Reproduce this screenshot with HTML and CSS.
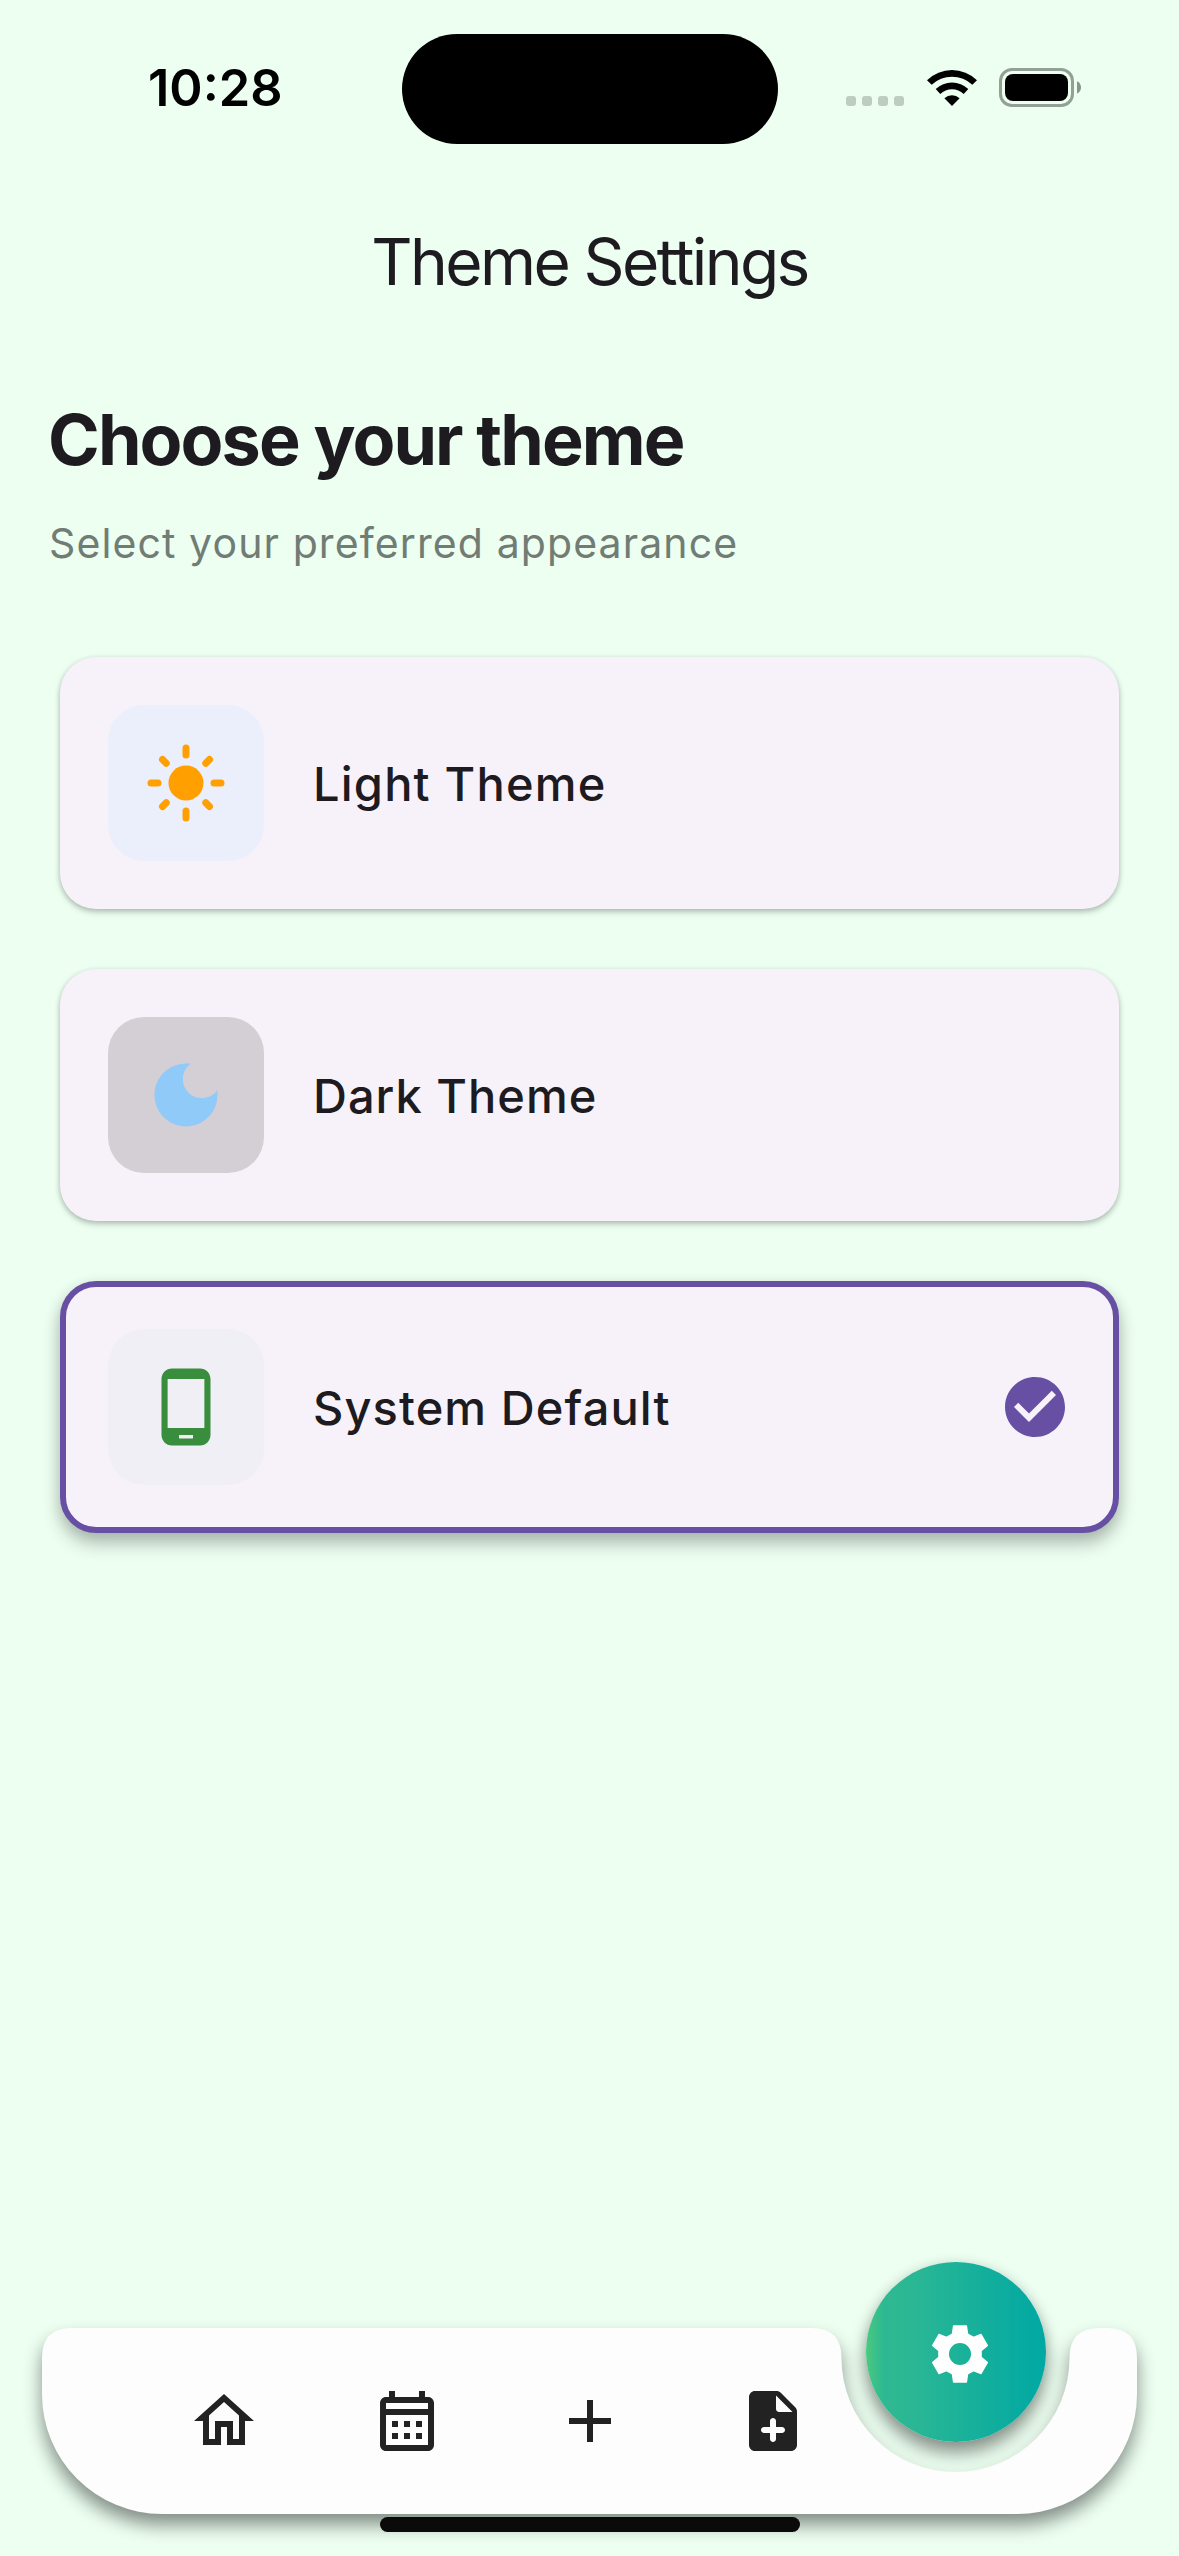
FILE: index.html
```html
<!DOCTYPE html>
<html lang="en">
<head>
<meta charset="utf-8">
<title>Theme Settings</title>
<link rel="stylesheet" href="styles.css">
</head>
<body>
<div class="screen">
  <header class="status">
    <div class="status-time">10:28</div>
    <div class="island"></div>
    <div class="status-icons">
      <svg class="signal" viewBox="0 0 58 10"><rect width="10" height="10" rx="3"/><rect x="16" width="10" height="10" rx="3"/><rect x="32" width="10" height="10" rx="3"/><rect x="48" width="10" height="10" rx="3"/></svg>
      <svg class="wifi" viewBox="0 0 50 37"><path d="M0 11.2A36 36 0 0 1 50 11.2L45.3 15.8A29.4 29.4 0 0 0 4.7 15.8ZM8.7 20A23.6 23.6 0 0 1 41.3 20L36.7 25A17 17 0 0 0 13.3 25ZM17.4 29.2A11.5 11.5 0 0 1 32.6 29.2L25 37Z"/></svg>
      <svg class="battery" viewBox="0 0 83 39"><rect x="1.5" y="1.5" width="72" height="36" rx="11.5" class="battery-case"/><rect x="6" y="6" width="63" height="27" rx="8"/><path class="battery-nub" d="M78 13.3C80.5 14.5 82 16.8 82 19.5S80.5 24.5 78 25.7Z"/></svg>
    </div>
  </header>

  <h1 class="title">Theme Settings</h1>

  <main class="content">
    <h2 class="heading">Choose your theme</h2>
    <p class="subtitle">Select your preferred appearance</p>
    <div class="cards">
      <div class="card">
        <div class="tile tile-light"><svg class="tile-icon sun" viewBox="0 0 24 24"><circle cx="12" cy="12" r="5"/><path d="M2 12h2M20 12h2M12 2v2M12 20v2M5.29 5.29l1.06 1.06M17.65 17.65l1.06 1.06M18.71 5.29l-1.06 1.06M6.35 17.65l-1.06 1.06"/></svg></div>
        <span class="label label-light">Light Theme</span>
      </div>
      <div class="card">
        <div class="tile tile-dark"><svg class="tile-icon moon" viewBox="0 0 24 24"><path d="M12 3c-4.97 0-9 4.03-9 9s4.03 9 9 9 9-4.03 9-9c0-.46-.04-.92-.1-1.36-.98 1.37-2.58 2.26-4.4 2.26-2.98 0-5.4-2.42-5.4-5.4 0-1.81.89-3.42 2.26-4.4-.44-.06-.9-.1-1.36-.1z"/></svg></div>
        <span class="label label-dark">Dark Theme</span>
      </div>
      <div class="card card-selected">
        <div class="tile tile-system"><svg class="tile-icon phone" viewBox="0 0 24 24"><path d="M16 1H8C6.34 1 5 2.34 5 4v16c0 1.66 1.34 3 3 3h8c1.66 0 3-1.34 3-3V4c0-1.66-1.34-3-3-3zm-2 20h-4v-1h4v1zm3.25-3H6.75V4h10.5v14z"/></svg></div>
        <span class="label label-system">System Default</span>
        <svg class="check" viewBox="0 0 24 24"><path d="M12 2C6.48 2 2 6.48 2 12s4.48 10 10 10 10-4.48 10-10S17.52 2 12 2zm-2 15l-5-5 1.41-1.41L10 14.17l7.59-7.59L19 8l-9 9z"/></svg>
      </div>
    </div>
  </main>

  <nav class="nav">
    <svg class="nav-shape" viewBox="0 0 1095 186"><path d="M30 0H769.5Q799.5 0 799.5 30A114 114 0 0 0 1027.5 30Q1027.5 0 1057.5 0H1065Q1095 0 1095 30V66A120 120 0 0 1 975 186H120A120 120 0 0 1 0 66V30Q0 0 30 0Z"/></svg>
    <div class="nav-items">
      <svg class="nav-icon" viewBox="0 0 24 24"><path d="M12 5.69l5 4.5V18h-2v-6H9v6H7v-7.81l5-4.5M12 3L2 12h3v8h6v-6h2v6h6v-8h3L12 3z"/></svg>
      <svg class="nav-icon" viewBox="0 0 24 24"><path d="M19 4h-1V2h-2v2H8V2H6v2H5c-1.11 0-1.99.9-1.99 2L3 20c0 1.1.89 2 2 2h14c1.1 0 2-.9 2-2V6c0-1.1-.9-2-2-2zm0 16H5V10h14v10zm0-12H5V6h14v2zM9 14H7v-2h2v2zm4 0h-2v-2h2v2zm4 0h-2v-2h2v2zm-8 4H7v-2h2v2zm4 0h-2v-2h2v2zm4 0h-2v-2h2v2z"/></svg>
      <svg class="nav-icon" viewBox="0 0 24 24"><path d="M19 13h-6v6h-2v-6H5v-2h6V5h2v6h6v2z"/></svg>
      <svg class="nav-icon" viewBox="0 0 24 24"><path d="M14.59 2.59c-.38-.38-.89-.59-1.42-.59H6c-1.1 0-2 .9-2 2v16c0 1.1.89 2 1.99 2H18c1.1 0 2-.9 2-2V8.83c0-.53-.21-1.04-.59-1.41l-4.82-4.83zM15 16h-2v2c0 .55-.45 1-1 1s-1-.45-1-1v-2H9c-.55 0-1-.45-1-1s.45-1 1-1h2v-2c0-.55.45-1 1-1s1 .45 1 1v2h2c.55 0 1 .45 1 1s-.45 1-1 1zm-2-8V3.5L18.5 9H14c-.55 0-1-.45-1-1z"/></svg>
      <span class="nav-icon"></span>
    </div>
    <div class="fab"><svg class="gear" viewBox="-36 -36 72 72"><path fill-rule="evenodd" d="M-7.6-20L-6.4-28H6.4L7.6-20L13.5-16.6L21.05-19.5L27.4-8.5L21.1-3.4V3.4L27.4 8.5L21.05 19.5L13.5 16.6L7.6 20L6.4 28H-6.4L-7.6 20L-13.5 16.6L-21.05 19.5L-27.4 8.5L-21.1 3.4V-3.4L-27.4-8.5L-21.05-19.5L-13.5-16.6ZM0-11.7A11.7 11.7 0 1 0 0 11.7A11.7 11.7 0 1 0 0-11.7Z"/></svg></div>
  </nav>
  <div class="home-indicator"></div>
</div>
</body>
</html>
```
FILE: styles.css
```css
* { box-sizing: border-box; margin: 0; padding: 0; }
body { background: #ecfff1; }
svg { display: block; }
.screen {
  width: 1179px;
  height: 2556px;
  display: flex;
  flex-direction: column;
  background: #ecfff1;
  color: #1d1b20;
  font-family: Inter, "Liberation Sans", sans-serif;
  overflow: hidden;
  white-space: nowrap;
}
.status {
  display: grid;
  grid-template-columns: 402px 376px 1fr;
  height: 144px;
  padding-top: 34px;
}
.status-time {
  padding-left: 148px;
  color: #000;
  font-size: 50.5px;
  line-height: 108px;
  font-weight: 600;
  letter-spacing: 0;
}
.island { height: 110px; border-radius: 55px; background: #000; }
.status-icons { display: flex; padding: 34px 0 0 68px; }
.signal { width: 58px; height: 10px; margin: 28px 22.5px 0 0; fill: #bdcdc1; }
.wifi { width: 50px; height: 37px; margin: 1px 22.5px 0 0; }
.battery { width: 83px; height: 39px; }
.battery-case { fill: none; stroke: #93a096; stroke-width: 3; }
.battery-nub { fill: #8a968d; }
.title {
  height: 168px;
  margin-top: 34px;
  text-align: center;
  font-size: 64px;
  line-height: 168px;
  font-weight: 400;
  letter-spacing: -2.6px;
}
.content { padding: 52px 48px 0; }
.heading {
  height: 84px;
  font-size: 70px;
  line-height: 84px;
  font-weight: 700;
  letter-spacing: -1.9px;
}
.subtitle {
  height: 60px;
  margin-top: 31px;
  padding-left: 1px;
  color: #717c74;
  font-size: 41px;
  line-height: 60px;
  letter-spacing: 1.1px;
}
.cards { display: flex; flex-direction: column; gap: 60px; padding: 84px 12px 0; }
.card {
  display: flex;
  align-items: center;
  height: 252px;
  padding: 0 48px;
  border-radius: 36px;
  background: #f7f2fa;
  box-shadow: 0 3px 6px rgba(0,0,0,.22), 0 1px 5px rgba(0,0,0,.1);
}
.card-selected {
  padding: 0 42px;
  border: 6px solid #6750a4;
  box-shadow: 0 11px 18px rgba(0,0,0,.24), 0 3px 14px rgba(0,0,0,.1);
}
.tile {
  display: grid;
  place-items: center;
  width: 156px;
  height: 156px;
  border-radius: 36px;
}
.tile-light { background: #ebeefb; }
.tile-dark { background: #d4cfd5; }
.tile-system { background: #f1eff6; }
.tile-icon { width: 84px; height: 84px; }
.sun { fill: #ffa000; stroke: none; }
.sun path { stroke: #ffa000; stroke-width: 2; stroke-linecap: round; }
.moon { fill: #90caf9; }
.phone { fill: #388e3c; }
.label { margin-left: 49px; font-size: 47px; font-weight: 500; letter-spacing: 1.1px; }
.label-light { letter-spacing: 1.2px; }
.label-dark { letter-spacing: 1px; }
.check { width: 72px; height: 72px; margin-left: auto; fill: #6750a4; }
.nav {
  position: relative;
  width: 1095px;
  height: 186px;
  margin: auto 42px 0;
}
.nav-shape {
  position: absolute;
  inset: 0;
  width: 1095px;
  height: 186px;
  overflow: visible;
  fill: #fdfdfd;
  filter: drop-shadow(0 11px 9px rgba(0,0,0,.44));
}
.nav-items {
  position: relative;
  display: grid;
  grid-template-columns: repeat(5, 183px);
  justify-content: center;
  justify-items: center;
  align-items: center;
  height: 186px;
}
.nav-icon { width: 72px; height: 72px; fill: #222; }
.fab {
  position: absolute;
  left: 823.5px;
  top: -66px;
  width: 180px;
  height: 180px;
  padding: 56px 0 0 58px;
  border-radius: 50%;
  background: linear-gradient(90deg, #4bc97f 0, #2fb992 17px, #2bb794 45px, #00a8a3 100%);
  box-shadow: 0 12px 18px rgba(0,0,0,.38), 0 2px 14px rgba(0,0,0,.12);
}
.gear {
  width: 72px;
  height: 72px;
  fill: #fff;
  stroke: #fff;
  stroke-width: 1.4;
  stroke-linejoin: round;
}
.home-indicator {
  position: relative;
  width: 420px;
  height: 15px;
  margin: 3px auto 24px;
  border-radius: 8px;
  background: #0a0a0a;
}
```
